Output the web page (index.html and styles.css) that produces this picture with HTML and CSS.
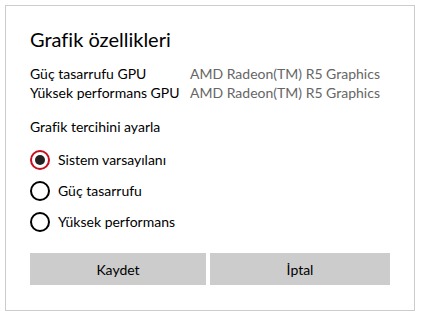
FILE: index.html
```html
<!DOCTYPE html>
<html lang="tr">
<head>
    <meta charset="UTF-8">
    <title>Grafik özellikleri</title>
    <link rel="stylesheet" href="styles.css">
</head>
<body>
    <div class="dialog">
        <h1>Grafik özellikleri</h1>
        <div class="gpu-list">
            <div class="gpu-row">
                <span class="gpu-label">Güç tasarrufu GPU</span>
                <span class="gpu-name">AMD Radeon(TM) R5 Graphics</span>
            </div>
            <div class="gpu-row">
                <span class="gpu-label">Yüksek performans GPU</span>
                <span class="gpu-name">AMD Radeon(TM) R5 Graphics</span>
            </div>
        </div>
        <div class="pref-title">Grafik tercihini ayarla</div>
        <div class="radio-group">
            <label class="radio"><span class="dot checked"></span>Sistem varsayılanı</label>
            <label class="radio"><span class="dot"></span>Güç tasarrufu</label>
            <label class="radio"><span class="dot"></span>Yüksek performans</label>
        </div>
        <div class="buttons">
            <button type="button" class="btn save">Kaydet</button>
            <button type="button" class="btn cancel">İptal</button>
        </div>
    </div>
</body>
</html>
```
FILE: styles.css
```css
body {
    margin: 0;
    padding: 5px;
    background: #fff;
    font-family: Lato, "Noto Sans", sans-serif;
    color: #000;
}

.dialog {
    width: 410px;
    height: 306px;
    box-sizing: border-box;
    border: 1px solid #cccccc;
    padding: 19px 24px 0 24px;
}

h1 {
    margin: 0 0 11px 0;
    font-size: 20px;
    font-weight: normal;
    line-height: 28px;
}

.gpu-list {
    font-size: 14px;
    line-height: 19px;
}

.gpu-row {
    display: flex;
}

.gpu-label {
    width: 160px;
}

.gpu-name {
    color: #666;
}

.pref-title {
    margin-top: 15px;
    font-size: 14px;
    line-height: 20px;
}

.radio-group {
    margin-top: 13px;
    display: flex;
    flex-direction: column;
    gap: 11px;
}

.radio {
    display: flex;
    align-items: center;
    font-size: 14px;
    line-height: 20px;
}

.dot {
    width: 20px;
    height: 20px;
    box-sizing: border-box;
    border: 2px solid #000;
    border-radius: 50%;
    margin-right: 8px;
    display: flex;
    align-items: center;
    justify-content: center;
}

.dot.checked {
    border-color: #c50f1f;
}

.dot.checked::after {
    content: "";
    width: 10px;
    height: 10px;
    border-radius: 50%;
    background: #222;
}

.buttons {
    margin-top: 21px;
    display: flex;
    gap: 4px;
}

.btn {
    width: 176px;
    height: 32px;
    border: none;
    background: #cccccc;
    font-family: inherit;
    font-size: 14px;
    color: #000;
}

.cancel {
    width: 180px;
}
```
